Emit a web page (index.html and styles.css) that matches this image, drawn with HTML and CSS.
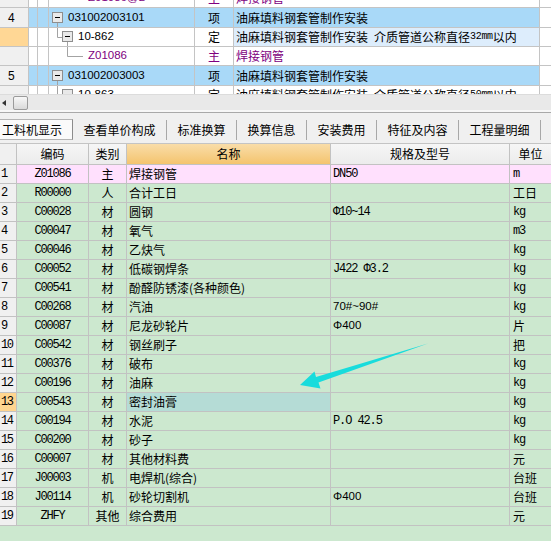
FILE: index.html
```html
<!DOCTYPE html>
<html>
<head>
<meta charset="utf-8">
<link rel="stylesheet" href="styles.css">
</head>
<body>
<div class="app">
  <div class="tree-grid">
    <div class="trow first">
      <div class="c rn"></div><div class="c n1"></div><div class="c n2"></div>
      <div class="c tree purple"><span class="ind39"></span><span class="code">Z01086@2</span></div>
      <div class="c ty purple">主</div>
      <div class="c nm purple">焊接钢管</div>
      <div class="c end"></div>
    </div>
    <div class="trow tall blue">
      <div class="c rn">4</div><div class="c n1"></div><div class="c n2"></div>
      <div class="c tree">
        <svg width="19" height="19" viewBox="0 0 19 19"><line class="tl" x1="8.5" y1="14" x2="8.5" y2="19"/><rect class="bx" x="3.5" y="4.5" width="10" height="10"/><line class="mn" x1="6" y1="9.5" x2="11" y2="9.5"/></svg>
        <span class="code">031002003101</span>
      </div>
      <div class="c ty">项</div>
      <div class="c nm">油麻填料钢套管制作安装</div>
      <div class="c end"></div>
    </div>
    <div class="trow">
      <div class="c rn cur"></div><div class="c n1"></div><div class="c n2"></div>
      <div class="c tree">
        <svg width="29" height="18" viewBox="0 0 29 18"><line class="tl" x1="8.5" y1="0" x2="8.5" y2="9.5"/><line class="tl" x1="8.5" y1="9.5" x2="13" y2="9.5"/><line class="tl" x1="18.5" y1="14" x2="18.5" y2="18"/><rect class="bx" x="13.5" y="3.5" width="10" height="10"/><line class="mn" x1="16" y1="8.5" x2="21" y2="8.5"/></svg>
        <span class="code">10-862</span>
      </div>
      <div class="c ty">定</div>
      <div class="c nm sel">油麻填料钢套管制作安装&ensp;介质管道公称直径<span class="sm">32mm</span>以内</div>
      <div class="c end"></div>
    </div>
    <div class="trow">
      <div class="c rn"></div><div class="c n1"></div><div class="c n2"></div>
      <div class="c tree purple">
        <svg width="39" height="18" viewBox="0 0 39 18"><line class="tl" x1="18.5" y1="0" x2="18.5" y2="9.5"/><line class="tl" x1="18.5" y1="9.5" x2="34" y2="9.5"/></svg>
        <span class="code">Z01086</span>
      </div>
      <div class="c ty purple">主</div>
      <div class="c nm purple">焊接钢管</div>
      <div class="c end"></div>
    </div>
    <div class="trow tall blue">
      <div class="c rn">5</div><div class="c n1"></div><div class="c n2"></div>
      <div class="c tree">
        <svg width="19" height="19" viewBox="0 0 19 19"><line class="tl" x1="8.5" y1="14" x2="8.5" y2="19"/><rect class="bx" x="3.5" y="4.5" width="10" height="10"/><line class="mn" x1="6" y1="9.5" x2="11" y2="9.5"/></svg>
        <span class="code">031002003003</span>
      </div>
      <div class="c ty">项</div>
      <div class="c nm">油麻填料钢套管制作安装</div>
      <div class="c end"></div>
    </div>
    <div class="trow">
      <div class="c rn"></div><div class="c n1"></div><div class="c n2"></div>
      <div class="c tree">
        <svg width="29" height="18" viewBox="0 0 29 18"><line class="tl" x1="8.5" y1="0" x2="8.5" y2="9.5"/><line class="tl" x1="8.5" y1="9.5" x2="13" y2="9.5"/><rect class="bx" x="13.5" y="3.5" width="10" height="10"/><line class="mn" x1="16" y1="8.5" x2="21" y2="8.5"/></svg>
        <span class="code">10-863</span>
      </div>
      <div class="c ty">定</div>
      <div class="c nm">油麻填料钢套管制作安装&ensp;介质管道公称直径<span class="sm">50mm</span>以内</div>
      <div class="c end"></div>
    </div>
  </div>

  <div class="hscroll">
    <span class="arr-left"></span>
    <span class="thumb"></span>
  </div>
  <div class="sep"></div>

  <div class="tabs">
    <div class="tab active">工料机显示</div>
    <div class="tab">查看单价构成</div>
    <div class="tab">标准换算</div>
    <div class="tab">换算信息</div>
    <div class="tab">安装费用</div>
    <div class="tab">特征及内容</div>
    <div class="tab">工程量明细</div>
  </div>

  <div class="grid">
    <div class="grow head">
      <div class="g gr"></div>
      <div class="g">编码</div>
      <div class="g">类别</div>
      <div class="g hot">名称</div>
      <div class="g">规格及型号</div>
      <div class="g">单位</div>
    </div>
    <div class="grow pink">
      <div class="g gr">1</div><div class="g cd">Z01086</div><div class="g tp">主</div><div class="g nmc">焊接钢管</div><div class="g sp mono">DN50</div><div class="g un mono">m</div>
    </div>
    <div class="grow">
      <div class="g gr">2</div><div class="g cd">R00000</div><div class="g tp">人</div><div class="g nmc">合计工日</div><div class="g sp"></div><div class="g un">工日</div>
    </div>
    <div class="grow">
      <div class="g gr">3</div><div class="g cd">C00028</div><div class="g tp">材</div><div class="g nmc">圆钢</div><div class="g sp mono">Φ10~14</div><div class="g un mono">kg</div>
    </div>
    <div class="grow">
      <div class="g gr">4</div><div class="g cd">C00047</div><div class="g tp">材</div><div class="g nmc">氧气</div><div class="g sp"></div><div class="g un mono">m3</div>
    </div>
    <div class="grow">
      <div class="g gr">5</div><div class="g cd">C00046</div><div class="g tp">材</div><div class="g nmc">乙炔气</div><div class="g sp"></div><div class="g un mono">kg</div>
    </div>
    <div class="grow">
      <div class="g gr">6</div><div class="g cd">C00052</div><div class="g tp">材</div><div class="g nmc">低碳钢焊条</div><div class="g sp mono">J422 Φ3.2</div><div class="g un mono">kg</div>
    </div>
    <div class="grow">
      <div class="g gr">7</div><div class="g cd">C00541</div><div class="g tp">材</div><div class="g nmc">酚醛防锈漆(各种颜色)</div><div class="g sp"></div><div class="g un mono">kg</div>
    </div>
    <div class="grow">
      <div class="g gr">8</div><div class="g cd">C00268</div><div class="g tp">材</div><div class="g nmc">汽油</div><div class="g sp sans">70#~90#</div><div class="g un mono">kg</div>
    </div>
    <div class="grow">
      <div class="g gr">9</div><div class="g cd">C00087</div><div class="g tp">材</div><div class="g nmc">尼龙砂轮片</div><div class="g sp sans">Φ400</div><div class="g un">片</div>
    </div>
    <div class="grow">
      <div class="g gr">10</div><div class="g cd">C00542</div><div class="g tp">材</div><div class="g nmc">钢丝刷子</div><div class="g sp"></div><div class="g un">把</div>
    </div>
    <div class="grow">
      <div class="g gr">11</div><div class="g cd">C00376</div><div class="g tp">材</div><div class="g nmc">破布</div><div class="g sp"></div><div class="g un mono">kg</div>
    </div>
    <div class="grow">
      <div class="g gr">12</div><div class="g cd">C00196</div><div class="g tp">材</div><div class="g nmc">油麻</div><div class="g sp"></div><div class="g un mono">kg</div>
    </div>
    <div class="grow">
      <div class="g gr cur">13</div><div class="g cd">C00543</div><div class="g tp">材</div><div class="g nmc picked">密封油膏</div><div class="g sp"></div><div class="g un mono">kg</div>
    </div>
    <div class="grow">
      <div class="g gr">14</div><div class="g cd">C00194</div><div class="g tp">材</div><div class="g nmc">水泥</div><div class="g sp mono">P.O 42.5</div><div class="g un mono">kg</div>
    </div>
    <div class="grow">
      <div class="g gr">15</div><div class="g cd">C00200</div><div class="g tp">材</div><div class="g nmc">砂子</div><div class="g sp"></div><div class="g un mono">kg</div>
    </div>
    <div class="grow">
      <div class="g gr">16</div><div class="g cd">C00007</div><div class="g tp">材</div><div class="g nmc">其他材料费</div><div class="g sp"></div><div class="g un">元</div>
    </div>
    <div class="grow">
      <div class="g gr">17</div><div class="g cd">J00003</div><div class="g tp">机</div><div class="g nmc">电焊机(综合)</div><div class="g sp"></div><div class="g un">台班</div>
    </div>
    <div class="grow">
      <div class="g gr">18</div><div class="g cd">J00114</div><div class="g tp">机</div><div class="g nmc">砂轮切割机</div><div class="g sp sans">Φ400</div><div class="g un">台班</div>
    </div>
    <div class="grow">
      <div class="g gr">19</div><div class="g cd">ZHFY</div><div class="g tp">其他</div><div class="g nmc">综合费用</div><div class="g sp"></div><div class="g un">元</div>
    </div>
  </div>

  <svg class="arrow" width="551" height="541" viewBox="0 0 551 541">
    <polygon points="300,385 314.5,371.5 316,377 428,343.5 318.5,382.5 320.5,388.5" fill="#18dcdc"/>
  </svg>
</div>
</body>
</html>
```

FILE: styles.css
```css
* { box-sizing: border-box; }
html, body { margin: 0; padding: 0; }
body {
  font-family: "Noto Sans CJK SC", sans-serif;
  font-size: 12px;
  color: #000;
  background: #f0f0f0;
}
.app {
  position: relative;
  width: 551px;
  height: 541px;
  overflow: hidden;
  background: #f0f0f0;
}

/* ---------- upper tree grid ---------- */
.tree-grid {
  height: 94px;
  overflow: hidden;
  background: #fff;
}
.trow {
  display: grid;
  grid-template-columns: 29px 9px 11px 146px 39px 306px 11px;
  height: 19px;
  border-bottom: 1px solid #c4c4c4;
  background: #fff;
}
.trow.first { height: 20px; margin-top: -12px; }
.trow.tall { height: 20px; }
.trow .c {
  border-right: 1px solid #c4c4c4;
  display: flex;
  align-items: center;
  white-space: nowrap;
  overflow: hidden;
  line-height: 1;
}
.trow .c.end { border-right: none; background: #fff; }
.trow .rn {
  background: #f0f0f0;
  padding-left: 8px;
  font-family: "Liberation Sans", sans-serif;
  font-size: 12px;
}
.trow .rn.cur { background: #ffd795; }
.trow.blue .c { background: #a9d9f8; }
.trow.blue .c.rn { background: #f0f0f0; }
.trow.blue .c.end { background: #fff; }
.trow .tree { padding: 0; }
.trow .tree svg { flex: none; display: block; align-self: flex-start; }
.ind39 { display: inline-block; width: 39px; flex: none; }
.code {
  font-family: "Liberation Sans", sans-serif;
  font-size: 11.5px;
}
.trow .ty { justify-content: center; }
.trow .nm { padding-left: 2px; }
.trow .nm.sel { background: #ddedfc; }
.sm {
  font-family: "Liberation Mono", monospace;
  font-size: 10px;
  letter-spacing: -0.3px;
}
.purple { color: #800080; }
.tl { stroke: #a3a3a3; stroke-width: 1; }
.bx { fill: #e9e9e9; stroke: #8e8e8e; stroke-width: 1; }
.mn { stroke: #000; stroke-width: 1; }

/* ---------- horizontal scrollbar ---------- */
.hscroll {
  position: relative;
  height: 16px;
  background: #e9e9e9;
  border-top: 1px solid #dcdcdc;
  display: flex;
  align-items: center;
}
.arr-left {
  width: 0;
  height: 0;
  margin-left: 2px;
  border-top: 3px solid transparent;
  border-bottom: 3px solid transparent;
  border-right: 4px solid #333;
}
.thumb {
  margin-left: 7px;
  width: 15px;
  height: 14px;
  border: 1px solid #9a9a9a;
  border-radius: 2px;
  background: linear-gradient(#f7f7f7, #d9d9d9);
}
.sep {
  height: 3px;
  background: #f7f7f7;
  border-bottom: 1px solid #a9a9a9;
}

/* ---------- tabs ---------- */
.tabs {
  height: 30px;
  display: flex;
  align-items: flex-end;
  padding-bottom: 3px;
  background: #f0f0f0;
}
.tab {
  height: 20px;
  padding: 0 10.5px;
  border-right: 1px solid #a8a8a8;
  display: flex;
  align-items: center;
  white-space: nowrap;
  line-height: 1;
}
.tab.active {
  height: 21px;
  width: 73px;
  padding: 0 0 0 2px;
  background: #fafafa;
  border: 1px solid #b4b4b4;
  border-left: none;
  border-right-color: #8c8c8c;
}

/* ---------- lower grid ---------- */
.grid {
  height: 398px;
  background: #cce8cf;
  border-top: 1px solid #c4c4c4;
}
.grow {
  display: grid;
  grid-template-columns: 17px 72px 38px 204px 179px 41px;
  height: 19px;
  border-bottom: 1px solid #c2c2c2;
}
.grow.head {
  height: 21px;
  background: #f0f0f0;
}
.g {
  border-right: 1px solid #c2c2c2;
  display: flex;
  align-items: center;
  white-space: nowrap;
  overflow: hidden;
  line-height: 1;
}
.g:last-child { border-right: none; }
.head .g { justify-content: center; background: linear-gradient(#f6f6f6, #ececec); }
.head .g.hot { background: linear-gradient(#f9dda9, #f4c46e); }
.g.gr {
  background: #f0f0f0;
  padding-left: 1px;
  font-family: "Liberation Mono", monospace;
  font-size: 12px;
  letter-spacing: -1.5px;
}
.g.gr.cur { background: #ffd58f; }
.head .g.gr { background: #f0f0f0; }
.g.cd {
  justify-content: center;
  font-family: "Liberation Mono", monospace;
  font-size: 12px;
  letter-spacing: -1.2px;
}
.g.tp { justify-content: center; }
.g.nmc { padding-left: 2px; }
.g.nmc.picked { background: #b5dcd6; }
.g.sp { padding-left: 2px; }
.g.un { padding-left: 3px; }
.mono {
  font-family: "Liberation Mono", "Noto Sans CJK SC", monospace;
  font-size: 12px;
  letter-spacing: -1.1px;
}
.sans {
  font-family: "Liberation Sans", sans-serif;
  font-size: 11.5px;
}
.grow.pink .g { background: #ffe0fd; }
.grow.pink .g.gr { background: #f0f0f0; }

/* ---------- annotation arrow ---------- */
.arrow {
  position: absolute;
  left: 0;
  top: 0;
  pointer-events: none;
}
```
